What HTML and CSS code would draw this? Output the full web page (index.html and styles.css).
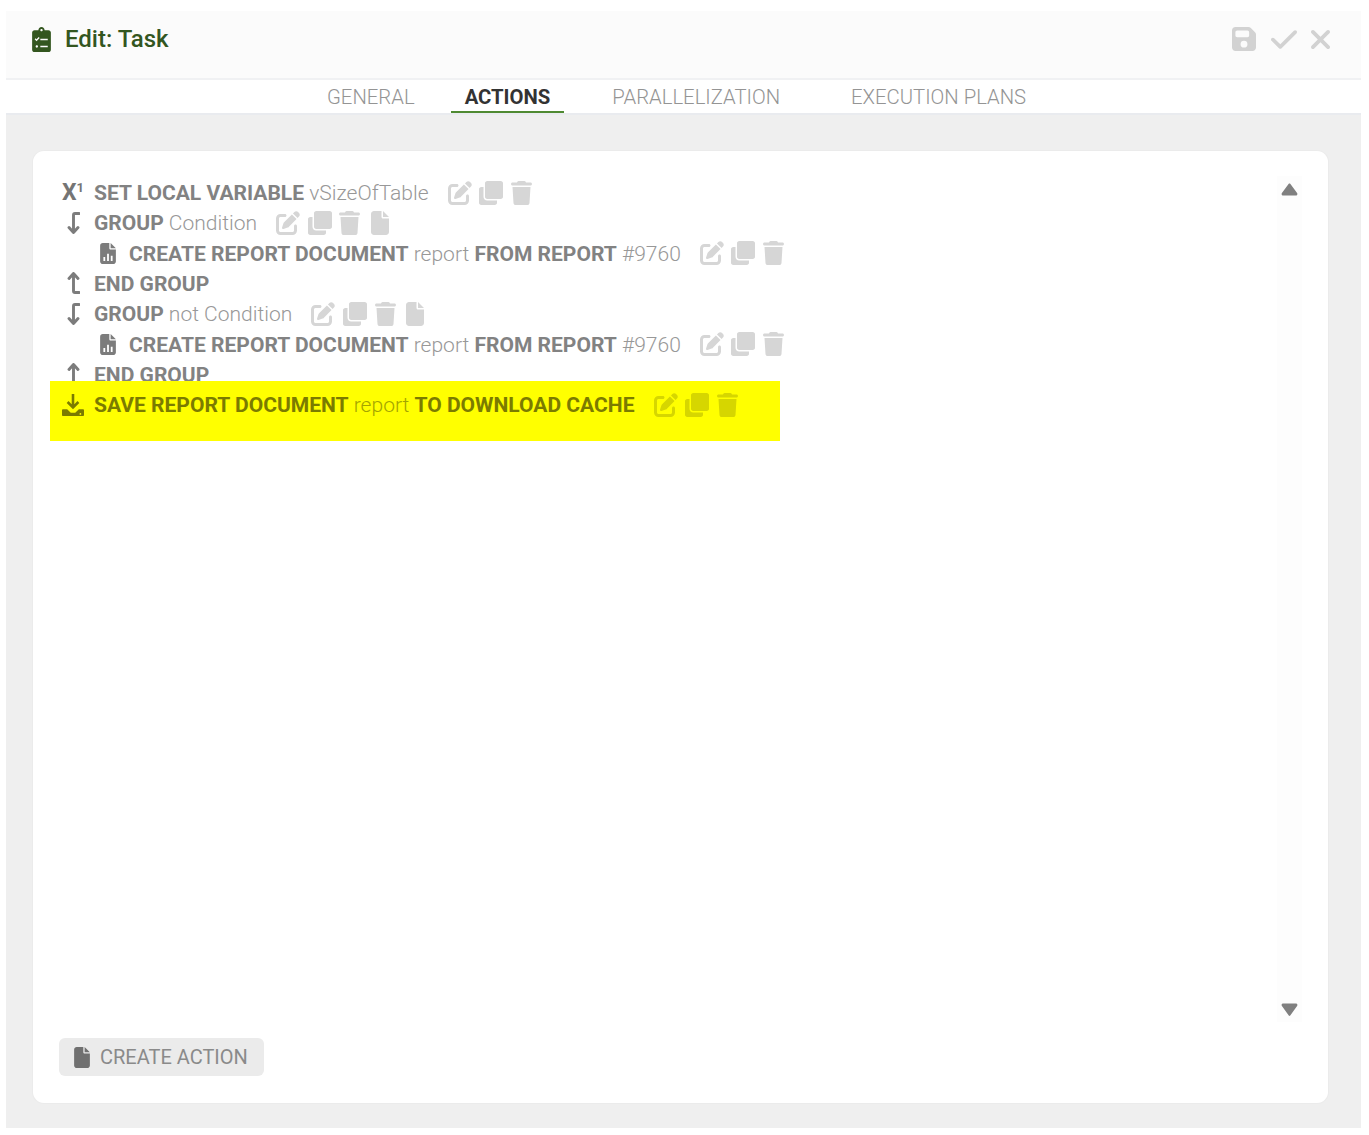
FILE: index.html
```html
<!DOCTYPE html>
<html lang="en">
<head>
<meta charset="utf-8">
<title>Edit: Task</title>
<link rel="stylesheet" href="styles.css">
</head>
<body>
<svg class="sprite" aria-hidden="true">
  <symbol id="i-edit" viewBox="0 0 512 512" preserveAspectRatio="xMinYMid"><path d="M471.6 21.7c-21.9-21.9-57.3-21.9-79.2 0L362.3 51.7l97.9 97.9 30.1-30.1c21.9-21.9 21.9-57.3 0-79.2L471.6 21.7zm-299.2 220c-6.1 6.1-10.8 13.6-13.5 21.9l-29.6 88.8c-2.9 8.6-.6 18.1 5.8 24.6s15.9 8.7 24.6 5.8l88.8-29.6c8.2-2.7 15.7-7.4 21.9-13.5L437.7 172.3 339.7 74.3 172.4 241.7zM96 64C43 64 0 107 0 160V416c0 53 43 96 96 96H352c53 0 96-43 96-96V320c0-17.7-14.3-32-32-32s-32 14.3-32 32v96c0 17.7-14.3 32-32 32H96c-17.7 0-32-14.3-32-32V160c0-17.7 14.3-32 32-32h96c17.7 0 32-14.3 32-32s-14.3-32-32-32H96z"/></symbol>
  <symbol id="i-clone" viewBox="0 0 512 512" preserveAspectRatio="xMinYMid"><path d="M464 0c26.51 0 48 21.49 48 48v288c0 26.51-21.49 48-48 48H176c-26.51 0-48-21.49-48-48V48c0-26.51 21.49-48 48-48h288M176 416c-44.112 0-80-35.888-80-80V128H48c-26.51 0-48 21.49-48 48v288c0 26.51 21.49 48 48 48h288c26.51 0 48-21.49 48-48v-48H176z"/></symbol>
  <symbol id="i-trash" viewBox="0 0 448 512" preserveAspectRatio="xMinYMid"><path d="M135.2 17.7L128 32H32C14.3 32 0 46.3 0 64S14.3 96 32 96H416c17.7 0 32-14.3 32-32s-14.3-32-32-32H320l-7.2-14.3C307.4 6.8 296.3 0 284.2 0H163.8c-12.1 0-23.2 6.8-28.6 17.7zM416 128H32L53.2 467c1.6 25.3 22.6 45 47.9 45H346.9c25.3 0 46.3-19.7 47.9-45L416 128z"/></symbol>
  <symbol id="i-file" viewBox="0 0 384 512" preserveAspectRatio="xMinYMid"><path d="M0 64C0 28.7 28.7 0 64 0H224V128c0 17.7 14.3 32 32 32H384V448c0 35.3-28.7 64-64 64H64c-35.3 0-64-28.7-64-64V64zm384 64H256V0L384 128z"/></symbol>
  <symbol id="i-report" viewBox="0 0 384 512"><path fill-rule="evenodd" d="M0 64C0 28.7 28.7 0 64 0H224V128c0 17.7 14.3 32 32 32H384V448c0 35.3-28.7 64-64 64H64c-35.3 0-64-28.7-64-64V64zM80 340h44v96H80zM170 260h44v176h-44zM260 310h44v126h-44z"/><path d="M384 128H256V0L384 128z"/></symbol>
  <symbol id="i-down" viewBox="0 0 13 22"><path d="M12 1.5H8Q6.5 1.5 6.5 3V20M2 15.5l4.5 5 4.5-5" fill="none" stroke="#7c7c7c" stroke-width="2.9" stroke-linecap="round" stroke-linejoin="round"/></symbol>
  <symbol id="i-up" viewBox="0 0 13 22"><path d="M12 20.5H8Q6.5 20.5 6.5 19V2M2 6.5l4.5-5 4.5 5" fill="none" stroke="#7c7c7c" stroke-width="2.9" stroke-linecap="round" stroke-linejoin="round"/></symbol>
</svg>

<div class="dialog">
  <header class="header">
    <h1 class="title">
      <svg class="title-icon" viewBox="0 0 384 512"><path fill-rule="evenodd" d="M336 64h-80c0-35.3-28.7-64-64-64s-64 28.7-64 64H48C21.5 64 0 85.5 0 112v352c0 26.5 21.5 48 48 48h288c26.5 0 48-21.5 48-48V112c0-26.5-21.5-48-48-48zM192 40c13.3 0 24 10.7 24 24s-10.7 24-24 24-24-10.7-24-24 10.7-24 24-24zM72 232l18 18 44-44 20 20-64 64-38-38zM96 376c13.3 0 24 10.7 24 24s-10.7 24-24 24-24-10.7-24-24 10.7-24 24-24zM168 240h152v32H168zM168 384h152v32H168z"/></svg>
      <span>Edit: Task</span>
    </h1>
    <div class="header-actions">
      <svg class="h-icon h-save" viewBox="0 0 448 512"><path d="M64 32C28.7 32 0 60.7 0 96V416c0 35.3 28.7 64 64 64H384c35.3 0 64-28.7 64-64V173.3c0-17-6.7-33.3-18.7-45.3L352 50.7C340 38.7 323.7 32 306.7 32H64zm0 96c0-17.7 14.3-32 32-32H288c17.7 0 32 14.3 32 32v64c0 17.7-14.3 32-32 32H96c-17.7 0-32-14.3-32-32V128zM224 288a64 64 0 1 1 0 128 64 64 0 1 1 0-128z"/></svg>
      <svg class="h-icon h-check" viewBox="0 96 448 320"><path d="M438.6 105.4c12.5 12.5 12.5 32.8 0 45.3l-256 256c-12.5 12.5-32.8 12.5-45.3 0l-128-128c-12.5-12.5-12.5-32.8 0-45.3s32.8-12.5 45.3 0L160 338.7 393.4 105.4c12.5-12.5 32.8-12.5 45.3 0z"/></svg>
      <svg class="h-icon h-close" viewBox="32 96 320 320"><path d="M342.6 150.6c12.5-12.5 12.5-32.8 0-45.3s-32.8-12.5-45.3 0L192 210.7 86.6 105.4c-12.5-12.5-32.8-12.5-45.3 0s-12.5 32.8 0 45.3L146.7 256 41.4 361.4c-12.5 12.5-12.5 32.8 0 45.3s32.8 12.5 45.3 0L192 301.3 297.4 406.6c12.5 12.5 32.8 12.5 45.3 0s12.5-32.8 0-45.3L237.3 256 342.6 150.6z"/></svg>
    </div>
  </header>

  <nav class="tabs">
    <a class="tab tab-general">GENERAL</a>
    <a class="tab tab-actions active">ACTIONS</a>
    <a class="tab tab-parallel">PARALLELIZATION</a>
    <a class="tab tab-plans">EXECUTION PLANS</a>
  </nav>

  <main class="main">
    <section class="card">
      <div class="scroll-area">
        <ul class="list">
          <li class="row">
            <span class="lead"><span class="sup-icon">X<sup>1</sup></span></span>
            <span class="text"><b>SET LOCAL VARIABLE</b> vSizeOfTable</span>
            <span class="tools">
              <svg class="tool"><use href="#i-edit"/></svg><svg class="tool"><use href="#i-clone"/></svg><svg class="tool"><use href="#i-trash"/></svg>
            </span>
          </li>
          <li class="row">
            <span class="lead"><svg class="lead-icon"><use href="#i-down"/></svg></span>
            <span class="text"><b>GROUP</b> Condition</span>
            <span class="tools">
              <svg class="tool"><use href="#i-edit"/></svg><svg class="tool"><use href="#i-clone"/></svg><svg class="tool"><use href="#i-trash"/></svg><svg class="tool"><use href="#i-file"/></svg>
            </span>
          </li>
          <li class="row nested">
            <span class="lead"><svg class="lead-icon report"><use href="#i-report"/></svg></span>
            <span class="text"><b>CREATE REPORT DOCUMENT</b> report <b>FROM REPORT</b> #9760</span>
            <span class="tools">
              <svg class="tool"><use href="#i-edit"/></svg><svg class="tool"><use href="#i-clone"/></svg><svg class="tool"><use href="#i-trash"/></svg>
            </span>
          </li>
          <li class="row">
            <span class="lead"><svg class="lead-icon"><use href="#i-up"/></svg></span>
            <span class="text"><b>END GROUP</b></span>
          </li>
          <li class="row">
            <span class="lead"><svg class="lead-icon"><use href="#i-down"/></svg></span>
            <span class="text"><b>GROUP</b> not Condition</span>
            <span class="tools">
              <svg class="tool"><use href="#i-edit"/></svg><svg class="tool"><use href="#i-clone"/></svg><svg class="tool"><use href="#i-trash"/></svg><svg class="tool"><use href="#i-file"/></svg>
            </span>
          </li>
          <li class="row nested">
            <span class="lead"><svg class="lead-icon report"><use href="#i-report"/></svg></span>
            <span class="text"><b>CREATE REPORT DOCUMENT</b> report <b>FROM REPORT</b> #9760</span>
            <span class="tools">
              <svg class="tool"><use href="#i-edit"/></svg><svg class="tool"><use href="#i-clone"/></svg><svg class="tool"><use href="#i-trash"/></svg>
            </span>
          </li>
          <li class="row">
            <span class="lead"><svg class="lead-icon"><use href="#i-up"/></svg></span>
            <span class="text"><b>END GROUP</b></span>
          </li>
          <li class="row highlight">
            <span class="lead"><svg class="lead-icon wide" viewBox="0 0 512 512"><path fill-rule="evenodd" d="M226 0h60v240l75-75 42 42-147 147-147-147 42-42 75 75zM0 376c0-13 11-24 24-24h96l84 84h104l84-84h96c13 0 24 11 24 24v112c0 13-11 24-24 24H24c-13 0-24-11-24-24zM428 444a20 20 0 1 0 0 40 20 20 0 1 0 0-40z"/></svg></span>
            <span class="text"><b>SAVE REPORT DOCUMENT</b> report <b>TO DOWNLOAD CACHE</b></span>
            <span class="tools">
              <svg class="tool"><use href="#i-edit"/></svg><svg class="tool"><use href="#i-clone"/></svg><svg class="tool"><use href="#i-trash"/></svg>
            </span>
          </li>
        </ul>
        <div class="scrollbar">
          <svg class="arrow" viewBox="0 178 320 180" preserveAspectRatio="none"><path d="M288.662 352H31.338c-17.818 0-26.741-21.543-14.142-34.142l128.662-128.662c7.81-7.81 20.474-7.81 28.284 0l128.662 128.662c12.6 12.599 3.676 34.142-14.142 34.142z"/></svg>
          <svg class="arrow" viewBox="0 186 320 176" preserveAspectRatio="none"><path d="M31.3 192h257.3c17.8 0 26.7 21.5 14.1 34.1L174.1 354.8c-7.8 7.8-20.5 7.8-28.3 0L17.2 226.1C4.6 213.5 13.5 192 31.3 192z"/></svg>
        </div>
      </div>
      <div class="card-footer">
        <button class="btn" type="button">
          <svg class="btn-icon" viewBox="0 0 384 512"><path d="M0 64C0 28.7 28.7 0 64 0H224V128c0 17.7 14.3 32 32 32H384V448c0 35.3-28.7 64-64 64H64c-35.3 0-64-28.7-64-64V64zm384 64H256V0L384 128z"/></svg>
          <span>CREATE ACTION</span>
        </button>
      </div>
    </section>
  </main>
</div>
</body>
</html>
```

FILE: styles.css
```css
* { box-sizing: border-box; }
html, body { height: 100%; }
body {
  margin: 0;
  padding: 11px 8px 7px 6px;
  background: #fff;
  font-family: Roboto, "Liberation Sans", sans-serif;
}
.sprite { display: none; }

.dialog { height: 100%; display: flex; flex-direction: column; }

.header {
  height: 69px;
  flex: none;
  display: flex;
  align-items: center;
  justify-content: space-between;
  padding: 0 31px 11px 26px;
  background: #fbfbfb;
  border-bottom: 2px solid #f0f1f3;
}
.title {
  margin: 0;
  display: flex;
  align-items: center;
  gap: 14px;
  font-size: 24px;
  font-weight: 500;
  color: #33561f;
}
.title-icon { width: 19px; height: 25px; fill: #33561f; }
.header-actions { display: flex; align-items: center; gap: 14px; }
.h-icon { fill: #d2d2d2; }
.h-save { width: 24px; height: 28px; margin-right: 1px; }
.h-check { width: 26px; height: 19px; }
.h-close { width: 19px; height: 19px; }

.tabs {
  height: 35px;
  flex: none;
  display: flex;
  align-items: stretch;
  padding-left: 307px;
  background: #fff;
  border-bottom: 2px solid #e9ebef;
  font-size: 20.3px;
}
.tab {
  display: flex;
  align-items: center;
  padding: 2px 14px 0;
  color: #949494;
  font-weight: 300;
  border-bottom: 2px solid transparent;
}
.tab.active { color: #333; font-weight: 700; border-bottom-color: #4f8a32; }
.tab-actions { margin-left: 22px; }
.tab-parallel { margin-left: 34px; }
.tab-plans { margin-left: 43px; }

.main {
  flex: 1;
  min-height: 0;
  display: flex;
  padding: 36px 33px 25px 27px;
  background: #efefef;
}
.card {
  flex: 1;
  display: flex;
  flex-direction: column;
  gap: 16px;
  padding: 25px 26px 27px;
  background: #fff;
  border-radius: 11px;
  box-shadow: 0 0 0 1px #ebebeb;
}

.scroll-area { flex: 1; min-height: 0; display: flex; }
.list {
  flex: 1;
  margin: 0;
  padding: 1.4px 0 0;
  list-style: none;
  font-size: 21.04px;
  color: #989898;
}
.row {
  height: 30.3px;
  display: flex;
  align-items: center;
  font-weight: 300;
  white-space: nowrap;
}
.row b { font-weight: 700; color: #828282; }
.lead {
  flex: none;
  width: 28px;
  margin-right: 7px;
  display: flex;
  justify-content: center;
}
.nested { padding-left: 35px; }
.lead-icon { width: 13px; height: 22px; fill: #7c7c7c; }
.lead-icon.report { width: 16px; height: 21px; }
.lead-icon.wide { width: 22px; height: 22px; }
.sup-icon { font-size: 23px; font-weight: 700; line-height: 1; color: #757575; }
.sup-icon sup { font-size: 13px; vertical-align: 8px; line-height: 0; }
.tools { display: flex; margin-left: 19px; }
.tool { width: 31.6px; height: 24px; fill: #d6d6d6; flex: none; }

.highlight {
  position: relative;
  width: 730px;
  height: 59.6px;
  margin: -8.5px 0 0 -9px;
  padding: 9px 0 20.6px 9px;
  background: #ff0;
  color: #a4a400;
}
.highlight b { color: #7b7b00; }
.highlight .lead-icon { fill: #7b7b00; }
.highlight .tool { fill: #d6d600; }

.scrollbar {
  flex: none;
  width: 25px;
  display: flex;
  flex-direction: column;
  align-items: center;
  justify-content: space-between;
  padding: 7px 0 6px;
  background: #fdfdfd;
}
.arrow { width: 17px; height: 13px; fill: #808080; }

.card-footer { flex: none; display: flex; }
.btn {
  height: 38px;
  width: 205px;
  display: flex;
  align-items: center;
  gap: 10px;
  padding: 0 15px;
  border: 0;
  border-radius: 6px;
  background: #ebebeb;
  color: #8a8a8a;
  font-family: inherit;
  font-size: 20px;
  font-weight: 400;
  white-space: nowrap;
}
.btn-icon { width: 16px; height: 21px; fill: #707070; flex: none; }
```
